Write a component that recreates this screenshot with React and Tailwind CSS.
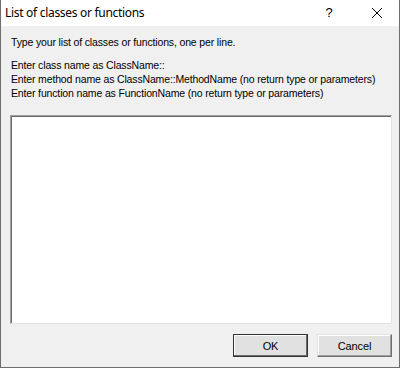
export default function App() {
  return (
    <div className="w-[400px] h-[368px] flex flex-col bg-[#f0f0f0] border-x border-b border-[#6e6e6e] overflow-hidden" style={{ fontFamily: '"Liberation Sans", Arial, sans-serif' }}>
      <div className="h-[26px] shrink-0 bg-white flex items-center pl-[4px]">
        <span className="flex-1 text-[12px] tracking-[-0.3px] text-black" style={{ fontFamily: '"Noto Sans", "Open Sans", sans-serif' }}>
          List of classes or functions
        </span>
        <span className="w-[20px] text-center text-[13px] text-black mr-[32px]">?</span>
        <svg width="12" height="12" viewBox="0 0 12 12" className="mr-[16px]">
          <path d="M1 1L11 11M11 1L1 11" stroke="#000" strokeWidth="1" />
        </svg>
      </div>
      <div className="flex-1 flex flex-col px-[8px] pt-[9px] text-[10.5px] tracking-[-0.15px] leading-[14px] text-black whitespace-nowrap">
        <p className="pl-[2px]">Type your list of classes or functions, one per line.</p>
        <div className="pl-[2px] mt-[9px] flex flex-col">
          <p>Enter class name as ClassName::</p>
          <p>Enter method name as ClassName::MethodName (no return type or parameters)</p>
          <p>Enter function name as FunctionName (no return type or parameters)</p>
        </div>
        <textarea className="mt-[15px] ml-[1px] w-[382px] h-[209px] shrink-0 resize-none bg-white border border-t-[#a0a0a0] border-l-[#a0a0a0] border-r-[#e3e3e3] border-b-[#e3e3e3] shadow-[inset_1px_1px_0_#696969] outline-none" />
        <div className="flex justify-end gap-[9px] mt-[10px] mr-[-1px]">
          <button className="w-[75px] h-[23px] text-[11px] bg-[#e1e1e1] border border-[#333] shadow-[inset_-1px_-1px_0_#6d6d6d,inset_1px_1px_0_#fff]">
            OK
          </button>
          <button className="w-[75px] h-[23px] text-[11px] bg-[#e1e1e1] border border-[#e3e3e3] border-r-[#6d6d6d] border-b-[#6d6d6d] shadow-[inset_-1px_-1px_0_#a0a0a0,inset_1px_1px_0_#fff]">
            Cancel
          </button>
        </div>
      </div>
    </div>
  );
}
